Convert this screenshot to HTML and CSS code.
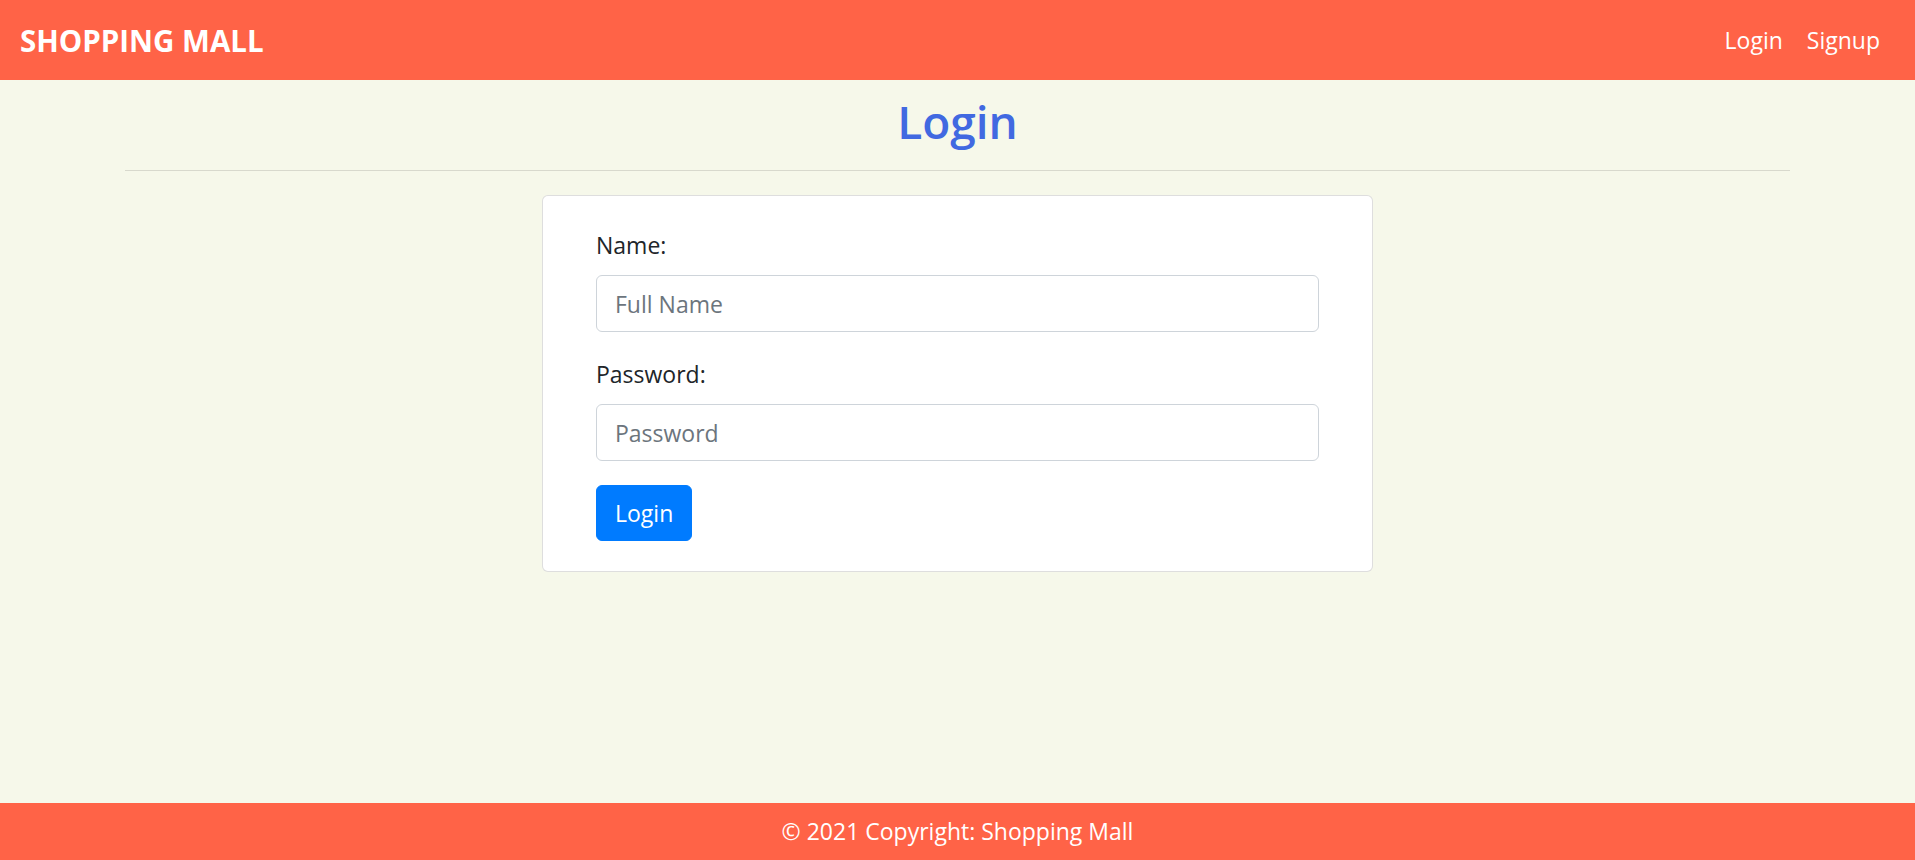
FILE: index.html
```html
<!DOCTYPE html>
<html lang="en">
<head>
<meta charset="utf-8">
<title>Shopping Mall - Login</title>
<link rel="stylesheet" href="styles.css">
</head>
<body>
<nav class="navbar">
  <a class="brand" href="#">SHOPPING MALL</a>
  <div class="nav-links">
    <a class="nav-link" href="#">Login</a>
    <a class="nav-link" href="#">Signup</a>
  </div>
</nav>
<main class="main">
  <div class="container">
    <h1 class="title">Login</h1>
    <hr class="divider">
    <div class="card">
      <form class="form">
        <div class="form-group">
          <label class="label" for="name">Name:</label>
          <input class="input" id="name" type="text" placeholder="Full Name">
        </div>
        <div class="form-group">
          <label class="label" for="password">Password:</label>
          <input class="input" id="password" type="password" placeholder="Password">
        </div>
        <button class="btn" type="button">Login</button>
      </form>
    </div>
  </div>
</main>
<footer class="footer">© 2021 Copyright: Shopping Mall</footer>
</body>
</html>
```
FILE: styles.css
```css
* { box-sizing: border-box; }
html, body { height: 100%; }
body {
  margin: 0;
  font-family: "Open Sans", "Noto Sans", sans-serif;
  background: #f6f8ea;
  color: #212529;
  display: flex;
  flex-direction: column;
  min-height: 100vh;
}
.navbar {
  height: 80px;
  background: #ff6347;
  display: flex;
  align-items: center;
  justify-content: space-between;
  padding: 0 23px 0 20px;
  flex-shrink: 0;
}
.brand {
  color: #fff;
  text-decoration: none;
  font-weight: 700;
  font-size: 29.5px;
  line-height: 45px;
}
.nav-links { display: flex; }
.nav-link {
  color: #fff;
  text-decoration: none;
  font-size: 23px;
  line-height: 36px;
  padding: 0 12px;
}
.main { flex: 1; }
.container {
  width: 1665px;
  margin: 0 auto;
}
.title {
  margin: 12px 0 0;
  text-align: center;
  color: #4169e1;
  font-size: 46px;
  font-weight: 600;
  line-height: 58px;
}
.divider {
  margin: 20px 0 24px;
  border: 0;
  border-top: 1px solid rgba(0, 0, 0, 0.12);
  height: 0;
}
.card {
  width: 831px;
  margin: 0 auto;
  background: #fff;
  border: 1px solid rgba(0, 0, 0, 0.13);
  border-radius: 6px;
  padding: 31px 53px 30px;
}
.form-group { margin-bottom: 24px; }
.label {
  display: block;
  font-size: 23px;
  line-height: 36px;
  margin-bottom: 12px;
}
.input {
  display: block;
  width: 100%;
  height: 57px;
  padding: 0 18px;
  font-family: inherit;
  font-size: 23px;
  color: #495057;
  background: #fff;
  border: 1.5px solid #ced4da;
  border-radius: 6px;
  outline: none;
}
.input::placeholder { color: #6c757d; }
.btn {
  display: inline-block;
  font-family: inherit;
  font-size: 23px;
  line-height: 36px;
  padding: 9px 18px;
  color: #fff;
  background: #007bff;
  border: 1.5px solid #007bff;
  border-radius: 6px;
  cursor: pointer;
}
.footer {
  flex-shrink: 0;
  height: 57px;
  background: #ff6347;
  color: #fff;
  font-size: 23px;
  line-height: 57px;
  text-align: center;
}
```
